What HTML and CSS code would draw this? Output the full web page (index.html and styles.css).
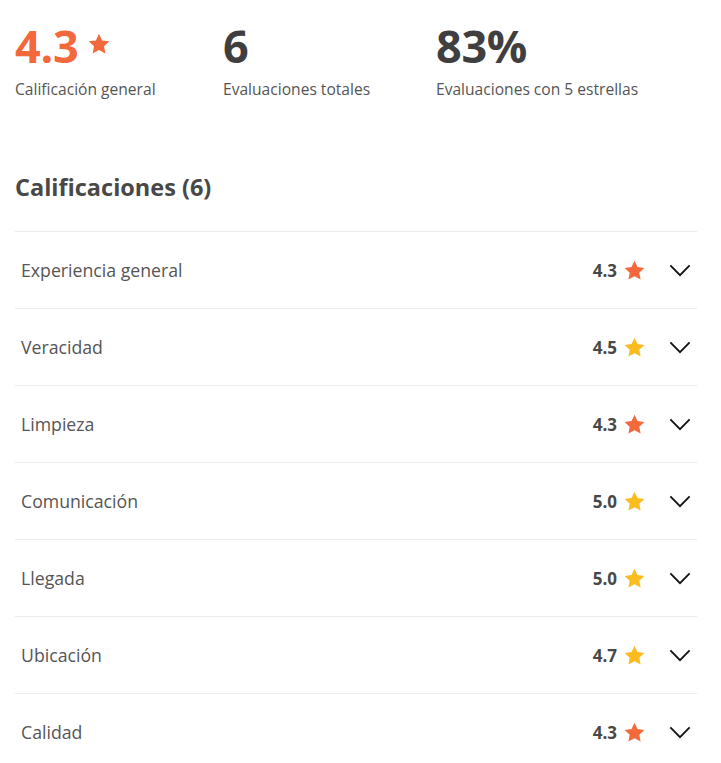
FILE: index.html
```html
<!DOCTYPE html>
<html lang="es">
<head>
<meta charset="utf-8">
<link rel="stylesheet" href="styles.css">
</head>
<body>
<div class="page">
  <div class="stats">
    <div class="stat">
      <div class="stat-value accent">4.3<svg class="big-star" viewBox="0 0 24 24"><path d="M12 1.8l3.1 6.6 7.2.9-5.3 5 1.4 7.1L12 17.9l-6.4 3.5L7 14.3l-5.3-5 7.2-.9z"/></svg></div>
      <div class="stat-label">Calificación general</div>
    </div>
    <div class="stat">
      <div class="stat-value">6</div>
      <div class="stat-label">Evaluaciones totales</div>
    </div>
    <div class="stat">
      <div class="stat-value">83%</div>
      <div class="stat-label">Evaluaciones con 5 estrellas</div>
    </div>
  </div>

  <h2 class="heading">Calificaciones (6)</h2>

  <ul class="ratings">
    <li class="row"><span class="label">Experiencia general</span><span class="score">4.3<svg class="star orange" viewBox="0 0 24 24"><path d="M12 1.8l3.1 6.6 7.2.9-5.3 5 1.4 7.1L12 17.9l-6.4 3.5L7 14.3l-5.3-5 7.2-.9z"/></svg><svg class="chev" viewBox="0 0 24 14"><path d="M1.5 1.5L12 12 22.5 1.5"/></svg></span></li>
    <li class="row"><span class="label">Veracidad</span><span class="score">4.5<svg class="star yellow" viewBox="0 0 24 24"><path d="M12 1.8l3.1 6.6 7.2.9-5.3 5 1.4 7.1L12 17.9l-6.4 3.5L7 14.3l-5.3-5 7.2-.9z"/></svg><svg class="chev" viewBox="0 0 24 14"><path d="M1.5 1.5L12 12 22.5 1.5"/></svg></span></li>
    <li class="row"><span class="label">Limpieza</span><span class="score">4.3<svg class="star orange" viewBox="0 0 24 24"><path d="M12 1.8l3.1 6.6 7.2.9-5.3 5 1.4 7.1L12 17.9l-6.4 3.5L7 14.3l-5.3-5 7.2-.9z"/></svg><svg class="chev" viewBox="0 0 24 14"><path d="M1.5 1.5L12 12 22.5 1.5"/></svg></span></li>
    <li class="row"><span class="label">Comunicación</span><span class="score">5.0<svg class="star yellow" viewBox="0 0 24 24"><path d="M12 1.8l3.1 6.6 7.2.9-5.3 5 1.4 7.1L12 17.9l-6.4 3.5L7 14.3l-5.3-5 7.2-.9z"/></svg><svg class="chev" viewBox="0 0 24 14"><path d="M1.5 1.5L12 12 22.5 1.5"/></svg></span></li>
    <li class="row"><span class="label">Llegada</span><span class="score">5.0<svg class="star yellow" viewBox="0 0 24 24"><path d="M12 1.8l3.1 6.6 7.2.9-5.3 5 1.4 7.1L12 17.9l-6.4 3.5L7 14.3l-5.3-5 7.2-.9z"/></svg><svg class="chev" viewBox="0 0 24 14"><path d="M1.5 1.5L12 12 22.5 1.5"/></svg></span></li>
    <li class="row"><span class="label">Ubicación</span><span class="score">4.7<svg class="star yellow" viewBox="0 0 24 24"><path d="M12 1.8l3.1 6.6 7.2.9-5.3 5 1.4 7.1L12 17.9l-6.4 3.5L7 14.3l-5.3-5 7.2-.9z"/></svg><svg class="chev" viewBox="0 0 24 14"><path d="M1.5 1.5L12 12 22.5 1.5"/></svg></span></li>
    <li class="row"><span class="label">Calidad</span><span class="score">4.3<svg class="star orange" viewBox="0 0 24 24"><path d="M12 1.8l3.1 6.6 7.2.9-5.3 5 1.4 7.1L12 17.9l-6.4 3.5L7 14.3l-5.3-5 7.2-.9z"/></svg><svg class="chev" viewBox="0 0 24 14"><path d="M1.5 1.5L12 12 22.5 1.5"/></svg></span></li>
  </ul>
</div>
</body>
</html>
```

FILE: styles.css
```css
* { box-sizing: border-box; }
html, body { margin: 0; padding: 0; background: #fff; }
body {
  font-family: "Open Sans", "Noto Sans", "Liberation Sans", sans-serif;
  color: #484848;
}
.page {
  width: 697px;
  padding: 20px 0 0 15px;
}
.stats {
  display: grid;
  grid-template-columns: 208px 213px 1fr;
}
.stat-value {
  display: flex;
  align-items: center;
  font-size: 45px;
  font-weight: 700;
  line-height: 52px;
  color: #3f3f3f;
  letter-spacing: -0.3px;
}
.stat-value.accent { color: #f4693b; }
.big-star {
  width: 24px;
  height: 24px;
  margin-left: 9px;
  margin-top: -4px;
  fill: #f4693b;
}
.stat-label {
  margin-top: 7px;
  font-size: 15.6px;
  line-height: 20px;
  color: #555;
}
.heading {
  margin: 74px 0 0;
  font-size: 23.5px;
  line-height: 28px;
  font-weight: 700;
  color: #484848;
}
.ratings {
  list-style: none;
  margin: 30px 0 0;
  padding: 0;
}
.row {
  height: 77px;
  border-top: 1px solid #ebebeb;
  display: flex;
  align-items: center;
  justify-content: space-between;
  padding: 0 6px;
}
.label {
  font-size: 17.7px;
  color: #555;
}
.score {
  display: flex;
  align-items: center;
  font-size: 17px;
  font-weight: 700;
  color: #484848;
}
.star {
  width: 23px;
  height: 23px;
  margin-left: 6px;
}
.star.orange { fill: #f4693b; }
.star.yellow { fill: #fbbc1f; }
.chev {
  width: 22px;
  height: 13px;
  margin-left: 23px;
  fill: none;
  stroke: #111;
  stroke-width: 2;
}
```
